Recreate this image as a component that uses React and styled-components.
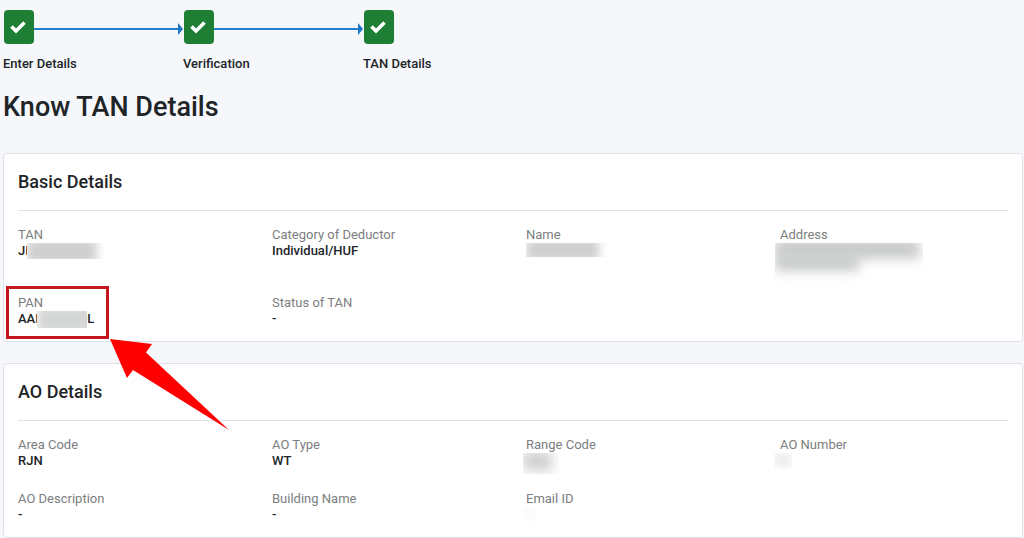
import React from 'react';
import styled, { createGlobalStyle } from 'styled-components';

const GlobalStyle = createGlobalStyle`
  * {
    box-sizing: border-box;
  }

  body {
    margin: 0;
    background: #f5f7fb;
    color: #212427;
    font-family: Roboto, "Liberation Sans", sans-serif;
  }
`;

const Page = styled.main`
  padding: 10px 1px 0 3px;
`;

// Stepper
const Steps = styled.ol`
  display: flex;
  margin: 0;
  padding: 0;
  list-style: none;
`;

const Step = styled.li`
  width: 180px;
`;

const StepTrack = styled.div`
  display: flex;
  align-items: center;
  height: 34px;
  padding-left: 1px;
`;

const StepBox = styled.span`
  display: flex;
  flex: none;
  align-items: center;
  justify-content: center;
  width: 30px;
  height: 34px;
  border-radius: 4px;
  background: #1e7e34;
`;

const StepLine = styled.span`
  flex: 1;
  height: 2px;
  margin-top: 4px;
  background: #2080cc;
`;

const StepArrow = styled.span`
  margin-top: 4px;
  border-top: 6px solid transparent;
  border-bottom: 6px solid transparent;
  border-left: 5px solid #1f74c4;
`;

const StepLabel = styled.div`
  margin-top: 12px;
  font-size: 13px;
  font-weight: 500;
  line-height: 16px;
`;

const PageTitle = styled.h1`
  margin: 19px 0 29px;
  font-size: 27px;
  font-weight: 500;
  line-height: 33px;
`;

// Cards
const Card = styled.section`
  margin-bottom: 21px;
  padding: 0 14px 14px;
  border: 1px solid #dfe2e8;
  border-radius: 4px;
  background: #fff;

  &:last-child {
    margin-bottom: 0;
  }
`;

const CardTitle = styled.h2`
  margin: 0 0 15px;
  padding: 16px 0;
  border-bottom: 1px solid #dfe1e5;
  font-size: 18px;
  font-weight: 500;
  line-height: 24px;
`;

const Fields = styled.dl`
  display: grid;
  grid-template-columns: repeat(4, 1fr);
  gap: 21px 26px;
  margin: 0;
`;

const Field = styled.div`
  position: relative;
`;

const FieldLabel = styled.dt`
  color: #7c7e80;
  font-size: 13px;
  line-height: 17px;
`;

const FieldValue = styled.dd`
  display: flex;
  height: ${({ $tall }) => ($tall ? 30 : 16)}px;
  margin: 0;
  font-size: 13px;
  font-weight: 500;
  line-height: 16px;
`;

// Hidden part of a value, the smudge is cut off at the edges of the mask
const Mask = styled.span`
  position: relative;
  flex: none;
  width: ${({ $width }) => $width}px;
  height: ${({ $height }) => $height || 16}px;
  margin-right: ${({ $overlap }) => -($overlap || 0)}px;
  margin-left: ${({ $outdent }) => -($outdent || 0)}px;
  overflow: hidden;
  background: #fff;
`;

const Smudge = styled.span`
  display: block;
  width: ${({ $width }) => $width}px;
  height: ${({ $height }) => $height || 16}px;
  margin-top: ${({ $rise }) => -($rise || 0)}px;
  background: ${({ $color }) => $color || '#cfcfcf'};
  filter: blur(${({ $blur }) => $blur || 5}px);
`;

const Highlight = styled.div`
  position: absolute;
  top: -8px;
  left: -12px;
  width: 103px;
  height: 53px;
  border: 3px solid #c4161c;
`;

const Pointer = styled.svg`
  position: absolute;
  top: 45px;
  left: 92px;
  z-index: 1;
`;

const steps = ['Enter Details', 'Verification', 'TAN Details'];

const basicDetails = [
  {
    label: 'TAN',
    value: (
      <>
        JI
        <Mask $width={84} $outdent={2}>
          <Smudge $width={70} $height={24} $rise={4} />
        </Mask>
      </>
    ),
  },
  { label: 'Category of Deductor', value: 'Individual/HUF' },
  {
    label: 'Name',
    value: (
      <Mask $width={84} $height={14}>
        <Smudge $width={73} $height={22} $rise={4} />
      </Mask>
    ),
  },
  {
    label: 'Address',
    tall: true,
    value: (
      <Mask $width={148} $height={42} $outdent={5}>
        <Smudge $width={145} $height={20} $rise={4} $color="#c9cbcb" $blur={6} />
        <Smudge $width={84} $height={18} $rise={6} $color="#c9cbcb" $blur={6} />
      </Mask>
    ),
  },
  {
    label: 'PAN',
    highlight: true,
    value: (
      <>
        AAI
        <Mask $width={50} $height={17} $outdent={2} $overlap={4}>
          <Smudge $width={60} $height={27} $rise={5} $color="#d4d6d6" />
        </Mask>
        -L
      </>
    ),
  },
  { label: 'Status of TAN', value: '-' },
];

const aoDetails = [
  { label: 'Area Code', value: 'RJN' },
  { label: 'AO Type', value: 'WT' },
  {
    label: 'Range Code',
    value: (
      <Mask $width={36} $height={21} $outdent={3}>
        <Smudge $width={29} $height={20} $rise={2} $color="#d0d0d0" $blur={6} />
      </Mask>
    ),
  },
  {
    label: 'AO Number',
    value: (
      <Mask $width={18} $outdent={6}>
        <Smudge $width={18} $height={14} $color="#ececec" />
      </Mask>
    ),
  },
  { label: 'AO Description', value: '-' },
  { label: 'Building Name', value: '-' },
  {
    label: 'Email ID',
    value: (
      <Mask $width={14} $outdent={3}>
        <Smudge $width={12} $height={12} $color="#f8f8f8" />
      </Mask>
    ),
  },
];

const Stepper = () => (
  <Steps>
    {steps.map((step, index) => (
      <Step key={step}>
        <StepTrack>
          <StepBox>
            <svg width="18" height="16" viewBox="0 0 18 16" aria-hidden="true">
              <path d="M1.5 7.5 L6 12 L14.5 3.5" fill="none" stroke="#fff" strokeWidth="3.6" />
            </svg>
          </StepBox>
          {index < steps.length - 1 && (
            <>
              <StepLine />
              <StepArrow />
            </>
          )}
        </StepTrack>
        <StepLabel>{step}</StepLabel>
      </Step>
    ))}
  </Steps>
);

const DetailsCard = ({ title, fields }) => (
  <Card>
    <CardTitle>{title}</CardTitle>
    <Fields>
      {fields.map(({ label, value, tall, highlight }) => (
        <Field key={label}>
          <FieldLabel>{label}</FieldLabel>
          <FieldValue $tall={tall}>{value}</FieldValue>
          {highlight && (
            <>
              <Highlight />
              <Pointer width="120" height="92" viewBox="0 0 120 92" aria-hidden="true">
                <path d="M0 0 L42 5 L36 13.5 L119 91 L23 31 L17 39 Z" fill="#fe0000" />
              </Pointer>
            </>
          )}
        </Field>
      ))}
    </Fields>
  </Card>
);

const App = () => (
  <>
    <GlobalStyle />
    <Page>
      <Stepper />
      <PageTitle>Know TAN Details</PageTitle>
      <DetailsCard title="Basic Details" fields={basicDetails} />
      <DetailsCard title="AO Details" fields={aoDetails} />
    </Page>
  </>
);

export default App;
